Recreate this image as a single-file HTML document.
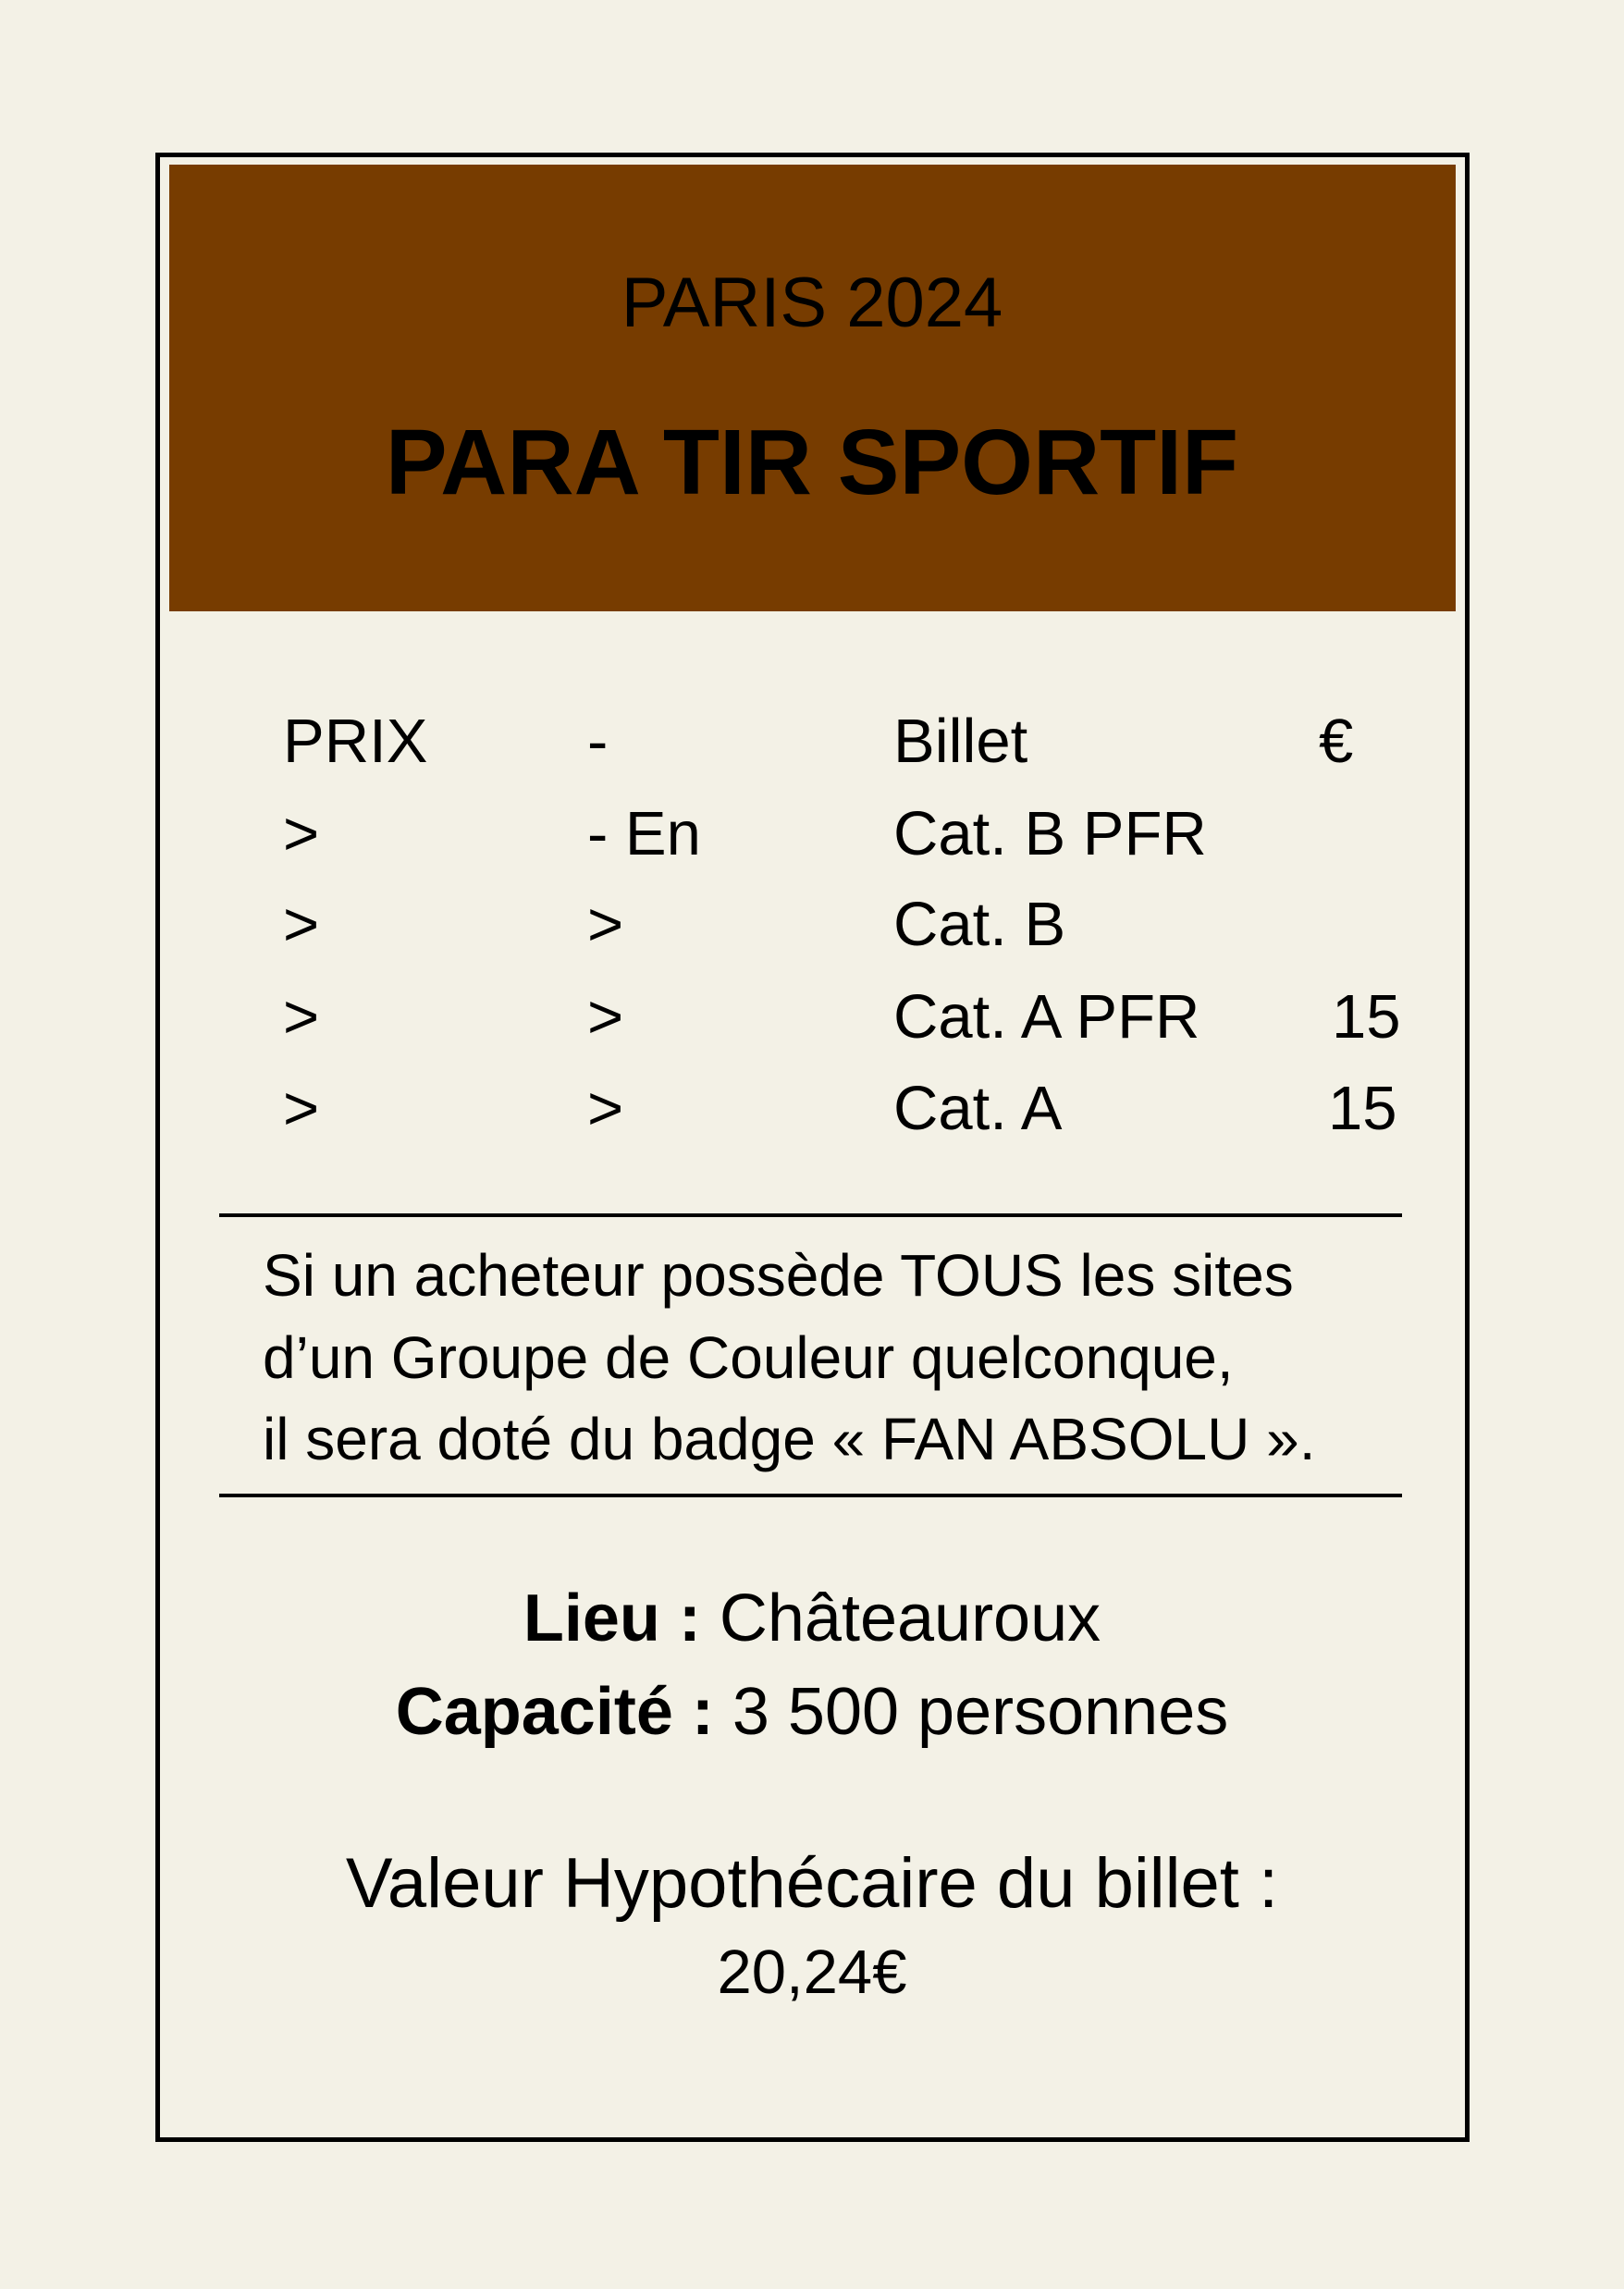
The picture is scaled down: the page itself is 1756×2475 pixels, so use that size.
<!DOCTYPE html>
<html><head><meta charset="utf-8"><style>
html,body{margin:0;padding:0}
body{width:1756px;height:2475px;background:#f3f1e6;position:relative;font-family:"Liberation Sans",sans-serif;color:#000;overflow:hidden}
.card{position:absolute;left:168px;top:165px;width:1411px;height:2141px;border:5px solid #000}
.hdr{position:absolute;left:183px;top:178px;width:1391px;height:483px;background:#773c00}
.t{position:absolute;white-space:nowrap;line-height:1}
.c{left:0;width:1756px;text-align:center}
.hr{position:absolute;left:237px;width:1279px;height:4px;background:#000}
.row{font-size:67px}
.p{font-size:64px}
</style></head><body>
<div class="card"></div>
<div class="hdr"></div>
<div class="t c" style="top:290px;font-size:76px">PARIS 2024</div>
<div class="t c" style="top:450px;font-size:100px;font-weight:bold">PARA TIR SPORTIF</div>

<div class="t row" style="left:306px;top:768px">PRIX</div>
<div class="t row" style="left:635px;top:768px">-</div>
<div class="t row" style="left:966px;top:768px">Billet</div>
<div class="t row" style="left:1426px;top:768px">€</div>

<div class="t row" style="left:306px;top:868px">&gt;</div>
<div class="t row" style="left:635px;top:868px">- En</div>
<div class="t row" style="left:966px;top:868px">Cat. B PFR</div>

<div class="t row" style="left:306px;top:966px">&gt;</div>
<div class="t row" style="left:635px;top:966px">&gt;</div>
<div class="t row" style="left:966px;top:966px">Cat. B</div>

<div class="t row" style="left:306px;top:1066px">&gt;</div>
<div class="t row" style="left:635px;top:1066px">&gt;</div>
<div class="t row" style="left:966px;top:1066px">Cat. A PFR</div>
<div class="t row" style="left:1440px;top:1066px">15</div>

<div class="t row" style="left:306px;top:1165px">&gt;</div>
<div class="t row" style="left:635px;top:1165px">&gt;</div>
<div class="t row" style="left:966px;top:1165px">Cat. A</div>
<div class="t row" style="left:1436px;top:1165px">15</div>

<div class="hr" style="top:1312px"></div>
<div class="t p" style="left:284px;top:1347px">Si un acheteur possède TOUS les sites</div>
<div class="t p" style="left:284px;top:1436px">d’un Groupe de Couleur quelconque,</div>
<div class="t p" style="left:284px;top:1524px">il sera doté du badge « FAN ABSOLU ».</div>
<div class="hr" style="top:1615px"></div>

<div class="t c" style="top:1714px;font-size:72px"><b>Lieu :</b> Châteauroux</div>
<div class="t c" style="top:1815px;font-size:72px"><b>Capacité :</b> 3 500 personnes</div>
<div class="t c" style="top:1999px;font-size:76px">Valeur Hypothécaire du billet :</div>
<div class="t c" style="top:2099px;font-size:67px">20,24€</div>
</body></html>
